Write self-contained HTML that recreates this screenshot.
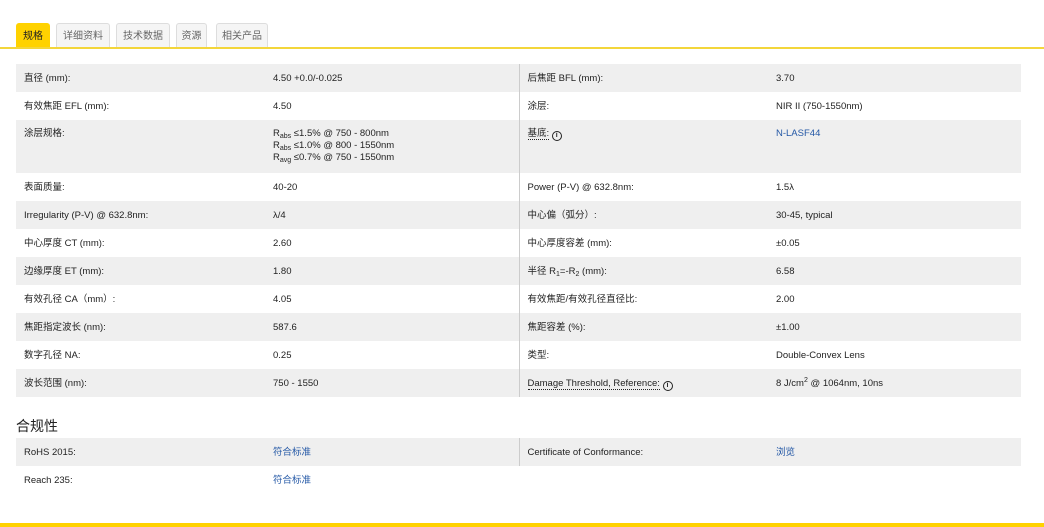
<!DOCTYPE html>
<html><head><meta charset="utf-8"><style>
*{margin:0;padding:0;box-sizing:border-box}
body{width:1044px;height:527px;background:#fff;font-family:"Liberation Sans","Noto Sans CJK SC",sans-serif;color:#222;font-size:9.5px;position:relative;overflow:hidden}
.tab{position:absolute;top:23px;height:25px;border:1px solid #ddd;border-bottom:none;background:#f5f5f5;color:#666;font-size:10px;line-height:25px;text-align:center;border-radius:3px 3px 0 0}
.tab.on{background:#ffd200;border-color:#ffd200;color:#222}
.yl{position:absolute;left:0;width:1044px;background:#f3d63b}
table{position:absolute;left:16px;width:1005px;border-collapse:collapse}
td{vertical-align:top;padding:9px 8px 0 8px;height:28px;line-height:11px}
tr.g td{background:#efefef}
td.c1{width:249px}td.c2{width:254px;border-right:1px solid #ccc}td.c3{width:249px}
.lk{color:#2458a6}
.dt{border-bottom:1px dotted #222}
.i{display:inline-block;width:10px;height:10px;border:1.3px solid #222;border-radius:50%;font-size:7px;line-height:8px;text-align:center;font-weight:bold;vertical-align:-1px}
sub{font-size:7px;vertical-align:-2px;line-height:0}sup{font-size:7px;vertical-align:4px;line-height:0}
h3{position:absolute;left:16px;top:416px;font-size:14px;font-weight:normal;color:#222}
</style></head><body>
<div class="tab on" style="left:16px;width:34px">规格</div>
<div class="tab" style="left:56px;width:54px">详细资料</div>
<div class="tab" style="left:116px;width:54px">技术数据</div>
<div class="tab" style="left:176px;width:31px">资源</div>
<div class="tab" style="left:216px;width:52px">相关产品</div>
<div class="yl" style="top:47px;height:2px"></div>
<table style="top:64px">
<tr class="g"><td class="c1">直径 (mm):</td><td class="c2">4.50 +0.0/-0.025</td><td class="c3">后焦距 BFL (mm):</td><td>3.70</td></tr>
<tr><td class="c1">有效焦距 EFL (mm):</td><td class="c2">4.50</td><td class="c3">涂层:</td><td>NIR II (750-1550nm)</td></tr>
<tr class="g"><td class="c1" style="height:53px;padding-top:8px">涂层规格:</td><td class="c2" style="padding-top:8px;line-height:12px">R<sub>abs</sub> ≤1.5% @ 750 - 800nm<br>R<sub>abs</sub> ≤1.0% @ 800 - 1550nm<br>R<sub>avg</sub> ≤0.7% @ 750 - 1550nm</td><td class="c3" style="padding-top:8px"><span class="dt">基底:</span> <span class="i">i</span></td><td class="lk" style="padding-top:8px">N-LASF44</td></tr>
<tr><td class="c1">表面质量:</td><td class="c2">40-20</td><td class="c3">Power (P-V) @ 632.8nm:</td><td>1.5λ</td></tr>
<tr class="g"><td class="c1">Irregularity (P-V) @ 632.8nm:</td><td class="c2">λ/4</td><td class="c3">中心偏（弧分）:</td><td>30-45, typical</td></tr>
<tr><td class="c1">中心厚度 CT (mm):</td><td class="c2">2.60</td><td class="c3">中心厚度容差 (mm):</td><td>±0.05</td></tr>
<tr class="g"><td class="c1">边缘厚度 ET (mm):</td><td class="c2">1.80</td><td class="c3">半径 R<sub>1</sub>=-R<sub>2</sub> (mm):</td><td>6.58</td></tr>
<tr><td class="c1">有效孔径 CA（mm）:</td><td class="c2">4.05</td><td class="c3">有效焦距/有效孔径直径比:</td><td>2.00</td></tr>
<tr class="g"><td class="c1">焦距指定波长 (nm):</td><td class="c2">587.6</td><td class="c3">焦距容差 (%):</td><td>±1.00</td></tr>
<tr><td class="c1">数字孔径 NA:</td><td class="c2">0.25</td><td class="c3">类型:</td><td>Double-Convex Lens</td></tr>
<tr class="g"><td class="c1">波长范围 (nm):</td><td class="c2">750 - 1550</td><td class="c3"><span class="dt">Damage Threshold, Reference:</span> <span class="i">i</span></td><td>8 J/cm<sup>2</sup> @ 1064nm, 10ns</td></tr>
</table>
<h3>合规性</h3>
<table style="top:438px">
<tr class="g"><td class="c1">RoHS 2015:</td><td class="c2 lk">符合标准</td><td class="c3">Certificate of Conformance:</td><td class="lk">浏览</td></tr>
<tr><td class="c1">Reach 235:</td><td class="c2 lk" style="border-right:none">符合标准</td><td class="c3"></td><td></td></tr>
</table>
<div class="yl" style="top:523px;height:4px;background:#ffd200"></div>
</body></html>
